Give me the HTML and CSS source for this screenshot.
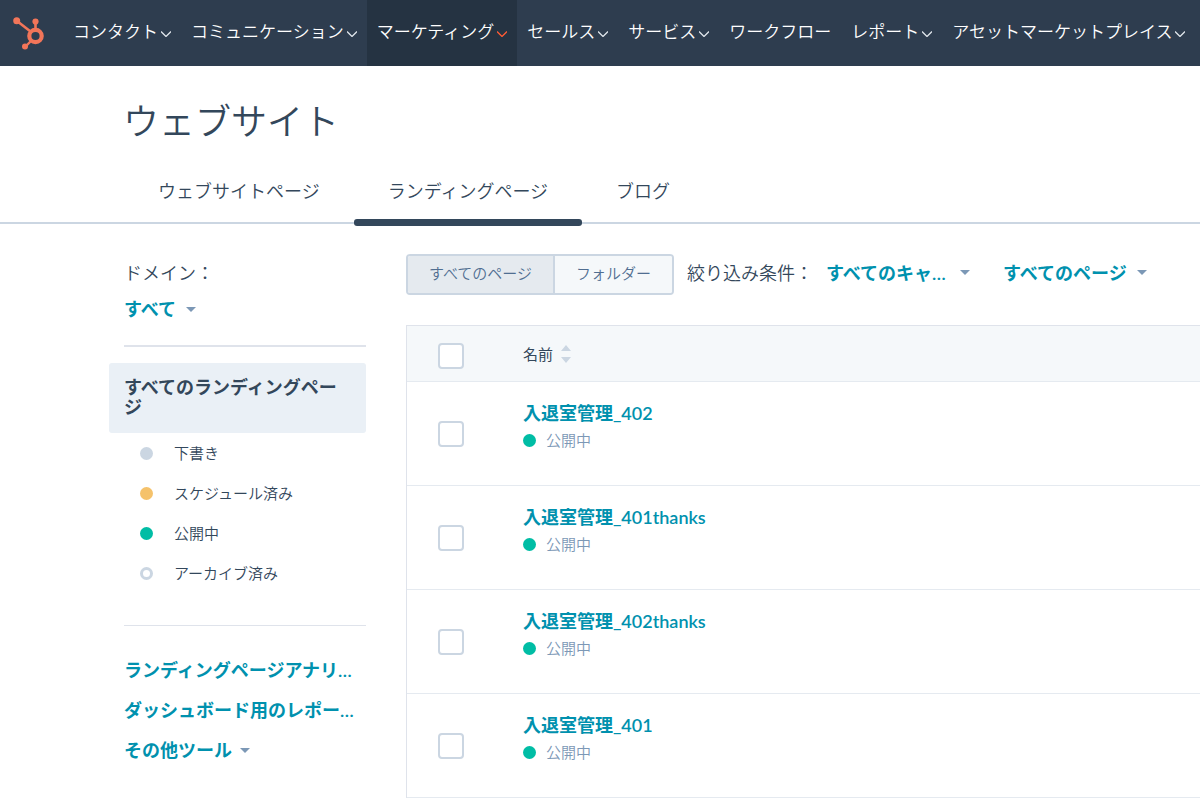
FILE: index.html
```
<!DOCTYPE html>
<html lang="ja">
<head>
<meta charset="utf-8">
<meta name="viewport" content="width=device-width, initial-scale=1">
<title>ウェブサイト</title>
<link rel="stylesheet" href="styles.css">
</head>
<body>
<header class="topbar">
  <a class="logo" href="#" aria-label="ホーム">
    <svg width="32" height="34" viewBox="0 0 32 34" fill="none" stroke="#f27559" aria-hidden="true">
      <circle cx="22.5" cy="20" r="6.2" stroke-width="4.2"/>
      <path d="M4 5 L17.5 15.5" stroke-width="2.6"/>
      <path d="M22.5 6 V14" stroke-width="2.6"/>
      <path d="M18 25 L12 31" stroke-width="2.4"/>
      <g fill="#f27559" stroke="none">
        <circle cx="3.7" cy="4.7" r="3.5"/>
        <circle cx="22.5" cy="5.6" r="3.1"/>
        <circle cx="12" cy="30.5" r="3"/>
      </g>
    </svg>
  </a>
  <nav class="nav" aria-label="メイン">
    <a class="nav-item" href="#">コンタクト<svg class="chevron" viewBox="0 0 10 6" aria-hidden="true"><path d="M0 0.5l5 5 5-5"/></svg></a>
    <a class="nav-item" href="#">コミュニケーション<svg class="chevron" viewBox="0 0 10 6" aria-hidden="true"><path d="M0 0.5l5 5 5-5"/></svg></a>
    <a class="nav-item nav-item-active" href="#">マーケティング<svg class="chevron" viewBox="0 0 10 6" aria-hidden="true"><path d="M0 0.5l5 5 5-5"/></svg></a>
    <a class="nav-item" href="#">セールス<svg class="chevron" viewBox="0 0 10 6" aria-hidden="true"><path d="M0 0.5l5 5 5-5"/></svg></a>
    <a class="nav-item" href="#">サービス<svg class="chevron" viewBox="0 0 10 6" aria-hidden="true"><path d="M0 0.5l5 5 5-5"/></svg></a>
    <a class="nav-item" href="#">ワークフロー</a>
    <a class="nav-item" href="#">レポート<svg class="chevron" viewBox="0 0 10 6" aria-hidden="true"><path d="M0 0.5l5 5 5-5"/></svg></a>
    <a class="nav-item" href="#">アセットマーケットプレイス<svg class="chevron" viewBox="0 0 10 6" aria-hidden="true"><path d="M0 0.5l5 5 5-5"/></svg></a>
  </nav>
</header>

<h1 class="title">ウェブサイト</h1>
<nav class="tabs" aria-label="ページの種類">
  <a class="tab" href="#">ウェブサイトページ</a>
  <a class="tab tab-active" href="#" aria-current="page">ランディングページ</a>
  <a class="tab" href="#">ブログ</a>
</nav>

<div class="layout">
  <aside class="sidebar">
    <div class="domain">
      <label class="domain-label" for="domain">ドメイン：</label>
      <span class="picker"><select id="domain"><option>すべて</option></select><span class="caret"></span></span>
    </div>
    <a class="all-pages" href="#">すべてのランディングページ</a>
    <ul class="statuses">
      <li><a class="status" href="#"><span class="dot dot-draft"></span>下書き</a></li>
      <li><a class="status" href="#"><span class="dot dot-scheduled"></span>スケジュール済み</a></li>
      <li><a class="status" href="#"><span class="dot dot-live"></span>公開中</a></li>
      <li><a class="status" href="#"><span class="dot dot-archived"></span>アーカイブ済み</a></li>
    </ul>
    <div class="tools">
      <a class="tool" href="#">ランディングページアナリ…</a>
      <a class="tool" href="#">ダッシュボード用のレポー…</a>
      <button class="tool" type="button">その他ツール<span class="caret"></span></button>
    </div>
  </aside>

  <main class="content">
    <div class="filters">
      <div class="toggle">
        <button class="toggle-btn toggle-on" type="button" aria-pressed="true">すべてのページ</button>
        <button class="toggle-btn" type="button" aria-pressed="false">フォルダー</button>
      </div>
      <span class="filter-label">絞り込み条件：</span>
      <span class="picker picker-campaign"><select aria-label="キャンペーン"><option>すべてのキャ…</option></select><span class="caret"></span></span>
      <span class="picker"><select aria-label="ページ"><option>すべてのページ</option></select><span class="caret"></span></span>
    </div>
    <table class="pages">
      <thead>
        <tr>
          <th class="check-cell"><input class="check" type="checkbox" aria-label="すべて選択"></th>
          <th><button class="sort" type="button">名前<svg width="10" height="18" viewBox="0 0 10 18" fill="#cbd6e2" aria-hidden="true"><path d="M5 0l5 6H0zM5 18l5-6H0z"/></svg></button></th>
        </tr>
      </thead>
      <tbody>
        <tr>
          <td class="check-cell"><input class="check" type="checkbox" aria-label="入退室管理_402を選択"></td>
          <td><a class="page-name" href="#">入退室管理_402</a><div class="page-status"><span class="dot dot-live"></span>公開中</div></td>
        </tr>
        <tr>
          <td class="check-cell"><input class="check" type="checkbox" aria-label="入退室管理_401thanksを選択"></td>
          <td><a class="page-name" href="#">入退室管理_401thanks</a><div class="page-status"><span class="dot dot-live"></span>公開中</div></td>
        </tr>
        <tr>
          <td class="check-cell"><input class="check" type="checkbox" aria-label="入退室管理_402thanksを選択"></td>
          <td><a class="page-name" href="#">入退室管理_402thanks</a><div class="page-status"><span class="dot dot-live"></span>公開中</div></td>
        </tr>
        <tr>
          <td class="check-cell"><input class="check" type="checkbox" aria-label="入退室管理_401を選択"></td>
          <td><a class="page-name" href="#">入退室管理_401</a><div class="page-status"><span class="dot dot-live"></span>公開中</div></td>
        </tr>
      </tbody>
    </table>
  </main>
</div>
</body>
</html>
```

FILE: styles.css
```
* {
  box-sizing: border-box;
}

body {
  margin: 0;
  background: #fff;
  color: #33475b;
  font-family: Lato, "Noto Sans CJK JP", sans-serif;
  font-size: 18px;
  font-weight: 350;
  line-height: 26px;
}

a {
  color: inherit;
  text-decoration: none;
}

button,
select {
  margin: 0;
  padding: 0;
  border: 0;
  background: none;
  color: inherit;
  font: inherit;
  cursor: pointer;
}

/* Top bar */
.topbar {
  display: flex;
  height: 66px;
  background: #2e3d4f;
  color: #fff;
}

.logo {
  display: flex;
  align-items: center;
  flex: none;
  width: 63px;
  padding-left: 13px;
}

.nav {
  display: flex;
  font-size: 17px;
}

.nav-item {
  display: flex;
  align-items: center;
  gap: 3px;
  padding: 0 10px 3px;
  white-space: nowrap;
}

.nav-item-active {
  background: #253342;
}

.chevron {
  width: 10px;
  height: 6px;
  margin-top: 5px;
  fill: none;
  stroke: #dfe5eb;
  stroke-width: 1.3;
}

.nav-item-active .chevron {
  stroke: #ff5c35;
}

/* Heading and tabs */
.title {
  margin: 0;
  padding: 30px 123px 0;
  font-size: 36px;
  font-weight: 350;
  line-height: 50px;
}

.tabs {
  display: flex;
  margin-top: 16px;
  padding: 0 124px;
  border-bottom: 2px solid #cbd6e2;
}

.tab {
  margin-bottom: -4px;
  padding: 16px 34px 15px;
  border-bottom: 7px solid transparent;
}

.tab-active {
  position: relative;
}

.tab-active::after {
  content: "";
  position: absolute;
  right: 0;
  bottom: -7px;
  left: 0;
  height: 7px;
  border-radius: 3px;
  background: #33475b;
}

/* Sidebar */
.layout {
  display: flex;
  gap: 40px;
  padding-top: 30px;
}

.sidebar {
  flex: none;
  width: 366px;
  padding: 6px 0 0 109px;
}

.domain {
  display: grid;
  justify-items: start;
  gap: 10px;
  margin-left: 15px;
  padding-bottom: 23px;
  border-bottom: 2px solid #dfe3eb;
}

.picker {
  display: inline-flex;
  align-items: center;
  gap: 8px;
  color: #0091ae;
  font-weight: 600;
}

.picker select {
  appearance: none;
}

.caret {
  width: 10px;
  border: 5px solid transparent;
  border-top-color: #7c98b6;
  border-bottom: 0;
}

.all-pages {
  display: block;
  margin-top: 16px;
  padding: 14px 15px 16px;
  border-radius: 3px;
  background: #eaf0f6;
  font-weight: 600;
  line-height: 20px;
}

.statuses {
  margin: 0 0 0 15px;
  padding: 0 0 32px;
  border-bottom: 1px solid #dfe3eb;
  list-style: none;
}

.status {
  display: flex;
  align-items: center;
  gap: 21px;
  height: 40px;
  padding-left: 16px;
  font-size: 15px;
}

.dot {
  flex: none;
  width: 13px;
  height: 13px;
  border-radius: 50%;
}

.dot-draft {
  background: #cbd6e2;
}

.dot-scheduled {
  background: #f5c26b;
}

.dot-live {
  background: #00bda5;
}

.dot-archived {
  border: 3px solid #cbd6e2;
}

.tools {
  display: grid;
  justify-items: start;
  gap: 14px;
  margin: 31px 0 0 15px;
}

.tool {
  display: flex;
  align-items: center;
  gap: 8px;
  color: #0091ae;
  font-weight: 600;
  white-space: nowrap;
}

/* Filters */
.content {
  flex: 1;
  min-width: 0;
}

.filters {
  display: flex;
  align-items: center;
  white-space: nowrap;
}

.toggle {
  display: flex;
  height: 41px;
  border: 2px solid #cbd6e2;
  border-radius: 4px;
  overflow: hidden;
}

.toggle-btn {
  padding: 0 21px 4px;
  background: #f5f8fa;
  color: #506e91;
  font-size: 15px;
}

.toggle-on {
  border-right: 2px solid #cbd6e2;
  background: #e5eaef;
}

.filter-label {
  margin: 0 13px;
}

.filters .filter-label,
.filters .picker {
  padding-bottom: 4px;
}

.picker-campaign {
  gap: 12px;
  margin-right: 33px;
}

/* Table */
.pages {
  width: 100%;
  margin-top: 30px;
  border-collapse: separate;
  border-spacing: 0;
  border-top: 1px solid #dfe3eb;
  border-left: 1px solid #dfe3eb;
}

.pages th,
.pages td {
  padding: 0;
  border-bottom: 1px solid #e5eaf0;
  text-align: left;
  vertical-align: top;
}

.pages th {
  height: 56px;
  background: #f5f8fa;
  font-weight: 400;
  vertical-align: middle;
}

.pages td {
  padding: 18px 0 31px;
}

.pages .check-cell {
  width: 116px;
  padding: 0 0 0 31px;
  vertical-align: middle;
}

.pages th.check-cell {
  padding-top: 4px;
}

.check {
  display: block;
  appearance: none;
  width: 26px;
  height: 26px;
  margin: 0;
  border: 2px solid #cbd6e2;
  border-radius: 4px;
  background: #fff;
}

.sort {
  display: flex;
  align-items: center;
  gap: 8px;
  font-size: 15px;
}

.page-name {
  color: #0091ae;
  font-weight: 600;
}

.page-status {
  display: flex;
  align-items: center;
  gap: 10px;
  color: #7c98b6;
  font-size: 15px;
  line-height: 28px;
}
```
